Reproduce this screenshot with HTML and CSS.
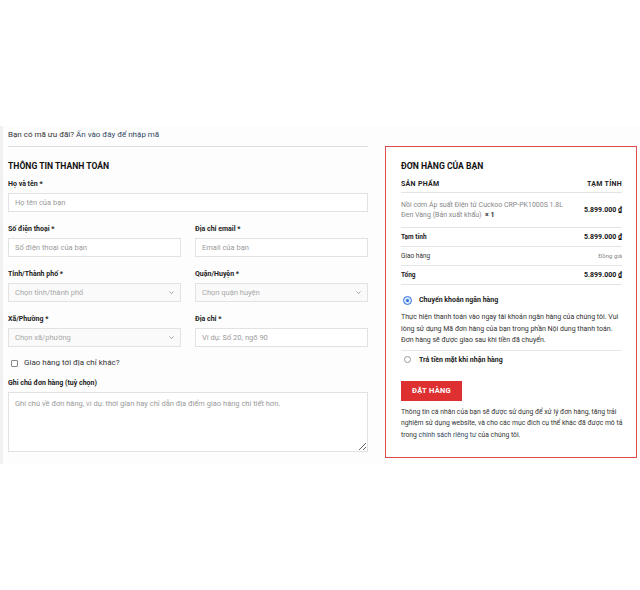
FILE: index.html
```html
<!DOCTYPE html>
<html lang="vi">
<head>
    <meta charset="UTF-8">
    <meta name="viewport" content="width=device-width, initial-scale=1.0">
    <title>Thanh toán</title>
    <link rel="stylesheet" href="styles.css">
</head>
<body>
    <div class="checkout">
        <div class="billing">
            <div class="coupon">Bạn có mã ưu đãi? <a href="#">Ấn vào đây để nhập mã</a></div>

            <h3>THÔNG TIN THANH TOÁN</h3>

            <div class="field">
                <label>Họ và tên *</label>
                <input type="text" placeholder="Họ tên của bạn">
            </div>

            <div class="row">
                <div class="field">
                    <label>Số điện thoại *</label>
                    <input type="text" placeholder="Số điện thoại của bạn">
                </div>
                <div class="field">
                    <label>Địa chỉ email *</label>
                    <input type="text" placeholder="Email của bạn">
                </div>
            </div>

            <div class="row">
                <div class="field">
                    <label>Tỉnh/Thành phố *</label>
                    <div class="select">Chọn tỉnh/thành phố
                        <svg viewBox="0 0 10 6"><path d="M1 1l4 4 4-4" fill="none" stroke="#777" stroke-width="1.3"/></svg>
                    </div>
                </div>
                <div class="field">
                    <label>Quận/Huyện *</label>
                    <div class="select">Chọn quận huyện
                        <svg viewBox="0 0 10 6"><path d="M1 1l4 4 4-4" fill="none" stroke="#777" stroke-width="1.3"/></svg>
                    </div>
                </div>
            </div>

            <div class="row">
                <div class="field">
                    <label>Xã/Phường *</label>
                    <div class="select">Chọn xã/phường
                        <svg viewBox="0 0 10 6"><path d="M1 1l4 4 4-4" fill="none" stroke="#777" stroke-width="1.3"/></svg>
                    </div>
                </div>
                <div class="field">
                    <label>Địa chỉ *</label>
                    <input type="text" placeholder="Ví dụ: Số 20, ngõ 90">
                </div>
            </div>

            <div class="ship-other">
                <span class="checkbox"></span> Giao hàng tới địa chỉ khác?
            </div>

            <div class="field">
                <label>Ghi chú đơn hàng (tuỳ chọn)</label>
                <textarea placeholder="Ghi chú về đơn hàng, ví dụ: thời gian hay chỉ dẫn địa điểm giao hàng chi tiết hơn."></textarea>
            </div>
        </div>

        <div class="order">
            <h3>ĐƠN HÀNG CỦA BẠN</h3>
            <div class="order-head">
                <div>SẢN PHẨM</div>
                <div>TẠM TÍNH</div>
            </div>
            <div class="order-item">
                <div class="item-name">Nồi cơm Áp suất Điện tử Cuckoo CRP-PK1000S 1.8L Đen Vàng (Bản xuất khẩu) &nbsp;<b>× 1</b></div>
                <div class="price">5.899.000 ₫</div>
            </div>
            <div class="order-line">
                <div class="bold">Tạm tính</div>
                <div class="price">5.899.000 ₫</div>
            </div>
            <div class="order-line">
                <div>Giao hàng</div>
                <div class="muted">Đồng giá</div>
            </div>
            <div class="order-line">
                <div class="bold">Tổng</div>
                <div class="price">5.899.000 ₫</div>
            </div>

            <div class="payment">
                <div class="method"><span class="radio checked"></span> Chuyển khoản ngân hàng</div>
                <p class="method-desc">Thực hiện thanh toán vào ngay tài khoản ngân hàng của chúng tôi. Vui lòng sử dụng Mã đơn hàng của bạn trong phần Nội dung thanh toán. Đơn hàng sẽ được giao sau khi tiền đã chuyển.</p>
                <div class="method method-last"><span class="radio"></span> Trả tiền mặt khi nhận hàng</div>
            </div>

            <button>ĐẶT HÀNG</button>

            <p class="privacy">Thông tin cá nhân của bạn sẽ được sử dụng để xử lý đơn hàng, tăng trải nghiệm sử dụng website, và cho các mục đích cụ thể khác đã được mô tả trong <a href="#">chính sách riêng tư</a> của chúng tôi.</p>
        </div>
    </div>
</body>
</html>
```

FILE: styles.css
```css
* {
    margin: 0;
    padding: 0;
    box-sizing: border-box;
}

body {
    background: #fff;
    font-family: Roboto, 'Liberation Sans', sans-serif;
    color: #222;
    padding-top: 126px;
}

a {
    color: #334862;
    text-decoration: none;
}

.checkout {
    display: flex;
    align-items: flex-start;
    gap: 17px;
    background: #fdfdfd;
    border-left: 3px solid #f1f1f1;
    padding-left: 5px;
    padding-bottom: 6px;
}

.billing {
    width: 360px;
}

.coupon {
    font-size: 8px;
    line-height: 12px;
    color: #333;
    padding: 3px 0 5px;
    border-bottom: 1px solid #ddd;
}

h3 {
    font-size: 8.6px;
    line-height: 12px;
    font-weight: 700;
    color: #111;
}

.billing h3 {
    margin-top: 13px;
}

.field {
    display: flex;
    flex-direction: column;
    margin-top: 7px;
}

.row {
    display: flex;
    gap: 14px;
    margin-top: 5px;
}

.row .field {
    flex: 1;
}

label {
    font-size: 7px;
    line-height: 10px;
    font-weight: 700;
    color: #222;
    margin-bottom: 4px;
}

input, textarea, .select {
    width: 100%;
    height: 19px;
    border: 1px solid #e2e2e2;
    background: #fff;
    font-family: inherit;
    font-size: 7.5px;
    color: #333;
    padding: 0 6px;
    outline: none;
}

input::placeholder, textarea::placeholder {
    color: #9a9a9a;
}

.select {
    display: flex;
    align-items: center;
    justify-content: space-between;
    background: #fafafa;
    color: #a8a8a8;
}

.select svg {
    width: 5px;
    height: 3px;
}

textarea {
    height: 60px;
    padding: 6px;
    resize: vertical;
}

.ship-other {
    display: flex;
    align-items: center;
    gap: 6px;
    font-size: 8px;
    line-height: 12px;
    color: #333;
    margin-top: 10px;
    padding-left: 3px;
}

.checkbox {
    width: 7px;
    height: 7px;
    border: 1px solid #888;
    border-radius: 1px;
    background: #fff;
}

.ship-other + .field {
    margin-top: 9px;
}

.order {
    width: 252px;
    margin-top: 20px;
    border: 1px solid #e04a4a;
    background: #fff;
    padding: 13px 14px 16px 15px;
}

.order-head {
    display: flex;
    justify-content: space-between;
    font-size: 7px;
    line-height: 10px;
    font-weight: 700;
    letter-spacing: 0.3px;
    color: #222;
    margin-top: 7px;
    padding-bottom: 3px;
    border-bottom: 1px solid #e4e4e4;
}

.order-item {
    display: flex;
    justify-content: space-between;
    align-items: center;
    gap: 10px;
    padding: 7px 0;
    border-bottom: 1px solid #e4e4e4;
}

.item-name {
    font-size: 7px;
    line-height: 10px;
    color: #888;
    width: 165px;
}

.item-name b {
    color: #333;
}

.price {
    font-size: 7px;
    font-weight: 700;
    color: #111;
    white-space: nowrap;
}

.order-line {
    display: flex;
    justify-content: space-between;
    align-items: center;
    font-size: 6.5px;
    line-height: 10px;
    color: #333;
    padding: 4px 0;
    border-bottom: 1px solid #e4e4e4;
}

.bold {
    font-weight: 700;
    color: #222;
}

.muted {
    color: #888;
    font-size: 6px;
}

.payment {
    margin-top: 9px;
}

.method {
    display: flex;
    align-items: center;
    gap: 8px;
    font-size: 7px;
    line-height: 12px;
    font-weight: 700;
    color: #222;
    padding-left: 3px;
}

.radio {
    width: 7px;
    height: 7px;
    border: 1px solid #999;
    border-radius: 50%;
    background: #fff;
}

.radio.checked {
    border: 2px solid #d6e4fb;
    background: #2b6fe0;
    outline: 0.5px solid #2b6fe0;
}

.method-desc {
    font-size: 7px;
    line-height: 11.5px;
    color: #333;
    margin-top: 6px;
    padding-bottom: 3px;
    border-bottom: 1px solid #e8e8e8;
}

.method-last {
    margin-top: 3px;
}

button {
    display: block;
    margin-top: 15px;
    height: 20px;
    padding: 0 11px;
    background: #de3031;
    color: #fff;
    border: none;
    font-family: inherit;
    font-size: 7.5px;
    font-weight: 700;
    letter-spacing: 0.3px;
}

.privacy {
    font-size: 6.8px;
    line-height: 11.5px;
    color: #333;
    margin-top: 6px;
    margin-right: -9px;
}
```
